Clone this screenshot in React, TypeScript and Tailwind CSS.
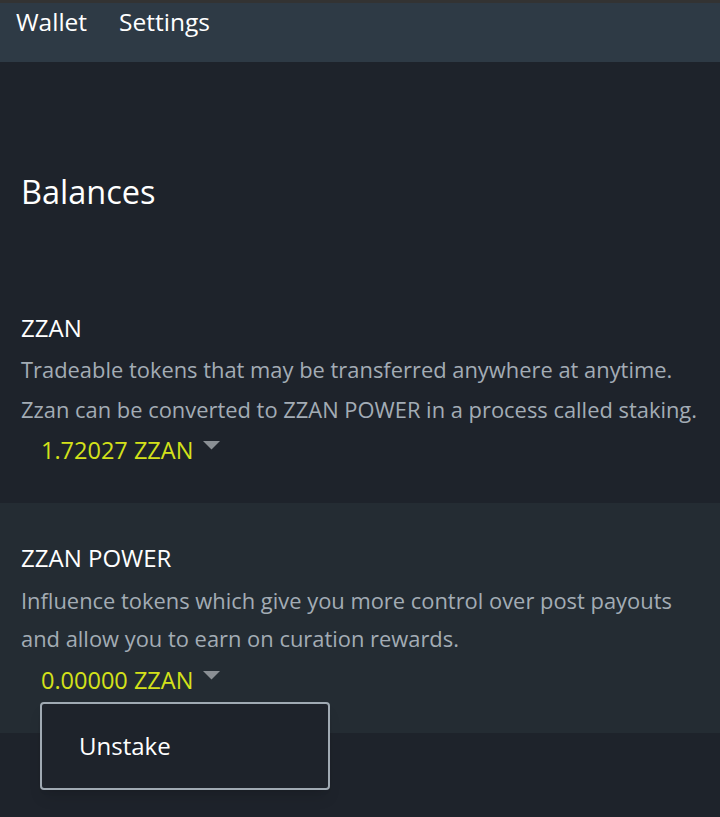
export default function App() {
  return (
    <div className="min-h-[817px] bg-[#1e232b] text-white" style={{ fontFamily: "'Open Sans', 'Noto Sans', sans-serif" }}>
      <div className="h-[3px] bg-[#333333]" />
      <nav className="flex h-[59px] items-start gap-[32px] bg-[#2e3a45] px-[16px] pt-[2px] text-[24.5px] leading-[34px]">
        <span>Wallet</span>
        <span>Settings</span>
      </nav>

      <h1 className="px-[21px] pt-[108px] text-[32.5px] leading-[44px]">Balances</h1>

      <section className="px-[21px] pb-[37px] pt-[98px]">
        <div className="text-[24px] leading-[32px]">ZZAN</div>
        <p className="mt-[6px] text-[21.9px] leading-[40px] text-[#a3acb5]">
          Tradeable tokens that may be transferred anywhere at anytime.
          <br />
          Zzan can be converted to ZZAN POWER in a process called staking.
        </p>
        <Amount value="1.72027 ZZAN" />
      </section>

      <section className="relative bg-[#242c33] px-[21px] pb-[37px] pt-[39px]">
        <div className="text-[24px] leading-[32px]">ZZAN POWER</div>
        <p className="mt-[8px] text-[21.9px] leading-[38px] text-[#a3acb5]">
          Influence tokens which give you more control over post payouts
          <br />
          and allow you to earn on curation rewards.
        </p>
        <Amount value="0.00000 ZZAN" className="mt-[6px]" />
        <div className="absolute left-[40px] top-[199px] flex h-[88px] w-[290px] items-center rounded-[4px] border-2 border-[#a0aab3] bg-[#1e232b] px-[37px] text-[24px] shadow-lg">
          Unstake
        </div>
      </section>
    </div>
  );
}

function Amount({ value, className = "mt-[4px]" }: { value: string; className?: string }) {
  return (
    <div className={"flex items-start gap-[10px] pl-[20px] text-[23.5px] leading-[32px] text-[#d4e11a] " + className}>
      <span>{value}</span>
      <svg width="17" height="9" viewBox="0 0 17 9" className="mt-[7px]">
        <polygon points="0,0 17,0 8.5,8.5" fill="#8a8f94" />
      </svg>
    </div>
  );
}
